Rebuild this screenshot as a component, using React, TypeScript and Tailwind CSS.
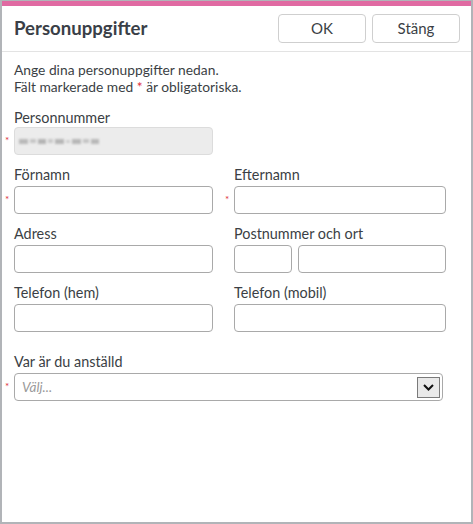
import React from "react";

const font = { fontFamily: "Lato, 'Noto Sans', sans-serif" };

function Req({ show }: { show?: boolean }) {
  if (!show) return null;
  return <span className="absolute left-[-9px] top-[8px] text-[10px] leading-none text-[#e0303a]">*</span>;
}

function Field({
  label,
  width,
  required,
  children,
}: {
  label: string;
  width: string;
  required?: boolean;
  children?: React.ReactNode;
}) {
  return (
    <div className={width}>
      <div className="h-[17px] text-[14.4px] leading-[17px] text-[#3b3f45]">{label}</div>
      <div className="relative mt-[3px]">
        <Req show={required} />
        {children ?? <div className="h-[28px] rounded-[4px] border border-[#a9a9a9] bg-white" />}
      </div>
    </div>
  );
}

export default function App() {
  return (
    <div
      style={font}
      className="h-[524px] w-[473px] overflow-hidden border-x-2 border-b-2 border-t border-[#b1b4b8] bg-white"
    >
      <div className="h-[5px] bg-[#e06aa2]" />

      {/* header */}
      <div className="flex h-[46px] items-center justify-between border-b border-[#e3e3e3] pl-[12px] pr-[11px]">
        <h1 className="text-[18.6px] font-bold text-[#3a3f47]">Personuppgifter</h1>
        <div className="flex gap-[6px]">
          <button className="h-[29px] w-[88px] rounded-[4px] border border-[#cfcfcf] bg-white text-[15px] text-[#3b3f45]">
            OK
          </button>
          <button className="h-[29px] w-[88px] rounded-[4px] border border-[#cfcfcf] bg-white text-[15px] text-[#3b3f45]">
            Stäng
          </button>
        </div>
      </div>

      {/* body */}
      <div className="pl-[12px] pt-[9px]">
        <p className="text-[13.8px] leading-[17px] text-[#3b3f45]">
          Ange dina personuppgifter nedan.
          <br />
          Fält markerade med <span className="text-[#e0303a]">*</span> är obligatoriska.
        </p>

        <div className="mt-[14px]">
          <div className="h-[17px] text-[14.4px] leading-[17px] text-[#3b3f45]">Personnummer</div>
          <div className="relative mt-[1px] w-[199px]">
            <Req show />
            <div className="flex h-[28px] items-center gap-[3px] rounded-[4px] border border-[#dcdcdc] bg-[#ececec] pl-[4px]">
              <div className="flex items-center gap-[2px] blur-[1.2px]">
                <span className="h-[5px] w-[9px] bg-[#b9b9b9]" />
                <span className="h-[4px] w-[6px] bg-[#c6c6c6]" />
                <span className="h-[5px] w-[8px] bg-[#b4b4b4]" />
                <span className="h-[4px] w-[5px] bg-[#c9c9c9]" />
                <span className="h-[5px] w-[9px] bg-[#b6b6b6]" />
                <span className="h-[3px] w-[4px] bg-[#cdcdcd]" />
                <span className="h-[5px] w-[9px] bg-[#b7b7b7]" />
                <span className="h-[4px] w-[6px] bg-[#c4c4c4]" />
                <span className="h-[5px] w-[8px] bg-[#b8b8b8]" />
              </div>
            </div>
          </div>
        </div>

        <div className="mt-[11px] flex gap-[21px]">
          <Field label="Förnamn" width="w-[199px]" required />
          <Field label="Efternamn" width="w-[212px]" required />
        </div>

        <div className="mt-[11px] flex gap-[21px]">
          <Field label="Adress" width="w-[199px]" />
          <Field label="Postnummer och ort" width="w-[212px]">
            <div className="flex gap-[6px]">
              <div className="h-[28px] w-[58px] rounded-[4px] border border-[#a9a9a9] bg-white" />
              <div className="h-[28px] flex-1 rounded-[4px] border border-[#a9a9a9] bg-white" />
            </div>
          </Field>
        </div>

        <div className="mt-[11px] flex gap-[21px]">
          <Field label="Telefon (hem)" width="w-[199px]" />
          <Field label="Telefon (mobil)" width="w-[212px]" />
        </div>

        <div className="mt-[21px]">
          <Field label="Var är du anställd" width="w-[429px]" required>
            <div className="flex h-[28px] items-center justify-between rounded-[4px] border border-[#a9a9a9] bg-white pl-[7px] pr-[2px]">
              <span className="text-[13.5px] italic text-[#9a9a9a]">Välj...</span>
              <span className="flex h-[21px] w-[23px] items-center justify-center border border-[#7a7a7a] bg-[#e9e9e9]">
                <svg width="11" height="7" viewBox="0 0 11 7">
                  <path d="M1 1l4.5 4.5L10 1" fill="none" stroke="#111" strokeWidth="2" />
                </svg>
              </span>
            </div>
          </Field>
        </div>
      </div>
    </div>
  );
}
